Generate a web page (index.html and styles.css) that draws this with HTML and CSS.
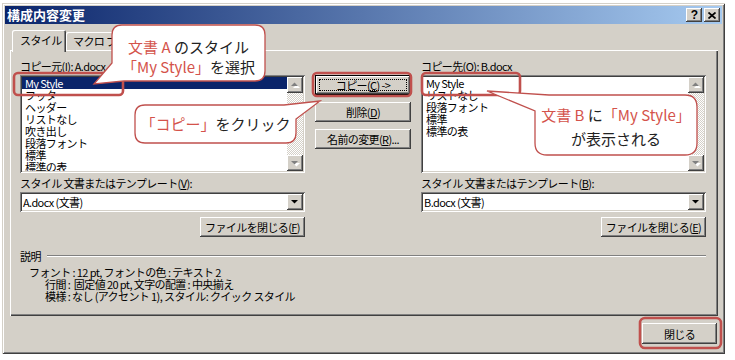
FILE: index.html
```html
<!DOCTYPE html>
<html lang="ja">
<head>
    <meta charset="UTF-8">
    <meta name="viewport" content="width=device-width, initial-scale=1.0">
    <title>構成内容変更</title>
    <link rel="stylesheet" href="styles.css">
</head>
<body>
    <div class="window">
        <div class="titlebar">
            <span class="title">構成内容変更</span>
            <div class="caption-buttons">
                <span class="cap-btn help">?</span>
                <span class="cap-btn">
                    <svg width="8" height="7" viewBox="0 0 8 7"><path d="M0.5 0.5L7.5 6.5M7.5 0.5L0.5 6.5" stroke="#000" stroke-width="1.7"/></svg>
                </span>
            </div>
        </div>
        <div class="client">
            <div class="tabs">
                <div class="tab active">スタイル</div>
                <div class="tab">マクロ プロジェクト アイテム</div>
            </div>
            <div class="panel">
                <div class="columns">
                    <!-- copy source -->
                    <div class="side">
                        <div class="label">コピー元(<u>I</u>): A.docx</div>
                        <div class="listbox">
                            <ul class="items">
                                <li class="selected">My Style</li>
                                <li>フッター</li>
                                <li>ヘッダー</li>
                                <li>リストなし</li>
                                <li>吹き出し</li>
                                <li>段落フォント</li>
                                <li>標準</li>
                                <li>標準の表</li>
                            </ul>
                            <div class="scrollbar">
                                <span class="sb-btn"><svg width="12" height="12" viewBox="0 0 12 12"><path d="M3 8h7L6.5 4.5z" fill="#fff" transform="translate(1 1)"/><path d="M2 7h7L5.5 3.5z" fill="#808080"/></svg></span>
                                <span class="sb-track"></span>
                                <span class="sb-btn"><svg width="12" height="12" viewBox="0 0 12 12"><path d="M3 5h7L6.5 8.5z" fill="#fff" transform="translate(1 1)"/><path d="M2 4h7L5.5 7.5z" fill="#808080"/></svg></span>
                            </div>
                        </div>
                        <div class="label sub">スタイル 文書またはテンプレート(<u>V</u>):</div>
                        <div class="combo">
                            <span class="combo-text">A.docx (文書)</span>
                            <span class="combo-btn"><svg width="12" height="12" viewBox="0 0 12 12"><path d="M2 4h7L5.5 7.5z" fill="#000"/></svg></span>
                        </div>
                        <button class="btn file-btn">ファイルを閉じる(<u>F</u>)</button>
                    </div>

                    <div class="middle">
                        <button class="btn default"><span class="focus">コピー(<u>C</u>) -&gt;</span></button>
                        <button class="btn">削除(<u>D</u>)</button>
                        <button class="btn">名前の変更(<u>R</u>)...</button>
                    </div>

                    <!-- copy target -->
                    <div class="side">
                        <div class="label">コピー先(<u>O</u>): B.docx</div>
                        <div class="listbox">
                            <ul class="items">
                                <li>My Style</li>
                                <li>リストなし</li>
                                <li>段落フォント</li>
                                <li>標準</li>
                                <li>標準の表</li>
                            </ul>
                            <div class="scrollbar">
                                <span class="sb-btn"><svg width="12" height="12" viewBox="0 0 12 12"><path d="M3 8h7L6.5 4.5z" fill="#fff" transform="translate(1 1)"/><path d="M2 7h7L5.5 3.5z" fill="#808080"/></svg></span>
                                <span class="sb-track"></span>
                                <span class="sb-btn"><svg width="12" height="12" viewBox="0 0 12 12"><path d="M3 5h7L6.5 8.5z" fill="#fff" transform="translate(1 1)"/><path d="M2 4h7L5.5 7.5z" fill="#808080"/></svg></span>
                            </div>
                        </div>
                        <div class="label sub">スタイル 文書またはテンプレート(<u>B</u>):</div>
                        <div class="combo">
                            <span class="combo-text">B.docx (文書)</span>
                            <span class="combo-btn"><svg width="12" height="12" viewBox="0 0 12 12"><path d="M2 4h7L5.5 7.5z" fill="#000"/></svg></span>
                        </div>
                        <button class="btn file-btn">ファイルを閉じる(<u>E</u>)</button>
                    </div>
                </div>

                <div class="group">
                    <div class="group-head"><span>説明</span><span class="etch"></span></div>
                    <div class="desc">
                        <div>フォント : 12 pt, フォントの色 : テキスト 2</div>
                        <div class="indent">行間 :&nbsp; 固定値 20 pt, 文字の配置 : 中央揃え</div>
                        <div class="indent">模様 : なし (アクセント 1), スタイル: クイック スタイル</div>
                    </div>
                </div>
            </div>
            <div class="footer">
                <button class="btn close-btn">閉じる</button>
            </div>
        </div>
    </div>

    <!-- annotation layer -->
    <svg class="marks" width="735" height="360" viewBox="0 0 735 360">
        <g fill="none" stroke="#c0504d" stroke-width="2.6">
            <rect x="14" y="73" width="109" height="22" rx="4"/>
            <rect x="313" y="73" width="98" height="23" rx="4"/>
            <rect x="422" y="73" width="98" height="22" rx="4"/>
            <rect x="640" y="318" width="81" height="30" rx="5"/>
        </g>
        <g fill="#fff" stroke="#c0504d" stroke-width="1.3">
            <path d="M122 25H255Q265 25 265 35V71Q265 81 255 81H124L94 84L112 63V35Q112 25 122 25Z"/>
            <path d="M145 105H284L320 101L296 119V133Q296 143 286 143H145Q135 143 135 133V115Q135 105 145 105Z"/>
            <path d="M487 91L549 95H685Q697 95 697 107V143Q697 155 685 155H547Q535 155 535 143V111Z"/>
        </g>
    </svg>
    <div class="note note-a"><span class="hl">文書 A</span> のスタイル<br><span class="hl">「My Style」</span>を選択</div>
    <div class="note note-b"><span class="hl">「コピー」</span>をクリック</div>
    <div class="note note-c"><span class="hl">文書 B</span> に<span class="hl">「My Style」</span><br>が表示される</div>
</body>
</html>
```

FILE: styles.css
```css
* {
    box-sizing: border-box;
}
body {
    margin: 0;
    background: #fff;
    font-family: "Noto Sans CJK JP", sans-serif;
    font-size: 11px;
    color: #000;
}
.window {
    width: 723px;
    height: 351px;
    margin: 3px 0 0 2px;
    padding: 3px;
    background: #d4d0c8;
    box-shadow: inset 1px 1px #d4d0c8, inset -1px -1px #404040, inset 2px 2px #fff, inset -2px -2px #808080;
    letter-spacing: -0.6px;
}
.titlebar {
    height: 18px;
    display: flex;
    align-items: center;
    justify-content: space-between;
    padding: 0 2px;
    background: linear-gradient(to right, #0a246a, #a6caf0);
}
.title {
    color: #fff;
    font-weight: bold;
    font-size: 13px;
    letter-spacing: 0;
    line-height: 18px;
}
.caption-buttons {
    display: flex;
    gap: 2px;
}
.cap-btn {
    width: 16px;
    height: 14px;
    display: flex;
    align-items: center;
    justify-content: center;
    background: #d4d0c8;
    box-shadow: inset -1px -1px #404040, inset 1px 1px #fff, inset -2px -2px #808080;
}
.cap-btn.help {
    font: bold 12px "Liberation Sans", sans-serif;
    line-height: 14px;
}
.client {
    padding: 6px 4px 0 5px;
}

/* tabs */
.tabs {
    display: flex;
    align-items: flex-end;
    height: 20px;
    padding-left: 2px;
}
.tab {
    height: 18px;
    padding: 0 7px;
    line-height: 18px;
    white-space: nowrap;
    border-radius: 2px 2px 0 0;
    box-shadow: inset 1px 1px #fff, inset -1px 0 #404040, inset -2px 0 #808080;
}
.tab.active {
    width: 54px;
    height: 22px;
    margin-bottom: -2px;
    padding: 0 8px;
    line-height: 20px;
    background: #d4d0c8;
    position: relative;
    z-index: 1;
}
.panel {
    height: 266px;
    padding: 9px 12px 0 10px;
    box-shadow: inset 1px 1px #fff, inset -1px -1px #404040, inset -2px -2px #808080;
}
.columns {
    display: grid;
    grid-template-columns: 285px 96px 285px;
    column-gap: 10px;
}
.side {
    display: flex;
    flex-direction: column;
}
.label {
    height: 14px;
    line-height: 14px;
    white-space: nowrap;
}
.label.sub {
    margin-top: 3px;
}

/* list boxes */
.listbox {
    margin-top: 2px;
    height: 98px;
    padding: 2px;
    display: flex;
    background: #fff;
    box-shadow: inset 1px 1px #808080, inset -1px -1px #fff, inset 2px 2px #404040, inset -2px -2px #d4d0c8;
}
.items {
    flex: 1;
    margin: 0;
    padding: 0;
    list-style: none;
    overflow: hidden;
}
.items li {
    height: 12px;
    line-height: 12px;
    padding-left: 3px;
    white-space: nowrap;
}
.items li.selected {
    background: #0a246a;
    color: #fff;
}
.scrollbar {
    width: 16px;
    display: flex;
    flex-direction: column;
}
.sb-btn,
.combo-btn {
    width: 16px;
    height: 16px;
    display: flex;
    align-items: center;
    justify-content: center;
    background: #d4d0c8;
    box-shadow: inset -1px -1px #404040, inset 1px 1px #fff, inset -2px -2px #808080;
}
.sb-track {
    flex: 1;
    background: repeating-conic-gradient(#d4d0c8 0 25%, #fff 0 50%) 0 0 / 2px 2px;
}

/* combo boxes */
.combo {
    margin-top: 2px;
    height: 20px;
    padding: 2px;
    display: flex;
    align-items: center;
    background: #fff;
    box-shadow: inset 1px 1px #808080, inset -1px -1px #fff, inset 2px 2px #404040, inset -2px -2px #d4d0c8;
}
.combo-text {
    flex: 1;
    padding-left: 1px;
    line-height: 16px;
}

/* buttons */
.btn {
    font: inherit;
    letter-spacing: inherit;
    color: #000;
    height: 20px;
    padding: 0;
    border: 0;
    background: #d4d0c8;
    box-shadow: inset -1px -1px #404040, inset 1px 1px #fff, inset -2px -2px #808080;
    white-space: nowrap;
}
.btn.default {
    padding: 4px;
    box-shadow: inset 0 0 0 1px #000, inset -2px -2px #404040, inset 2px 2px #fff, inset -3px -3px #808080;
}
.focus {
    display: block;
    height: 100%;
    line-height: 10px;
    border: 1px dotted #000;
}
.file-btn {
    margin-top: 5px;
    align-self: flex-end;
    width: 105px;
}
.middle {
    padding-top: 16px;
    display: flex;
    flex-direction: column;
    gap: 7px;
}

/* description */
.group {
    margin-top: 12px;
}
.group-head {
    height: 14px;
    display: flex;
    align-items: center;
}
.etch {
    flex: 1;
    height: 2px;
    margin-left: 6px;
    border-top: 1px solid #808080;
    border-bottom: 1px solid #fff;
}
.desc {
    margin-top: 3px;
    padding-left: 9px;
    line-height: 12px;
    white-space: nowrap;
}
.desc .indent {
    padding-left: 16px;
}
.footer {
    display: flex;
    justify-content: flex-end;
    padding: 7px 1px 0 0;
}
.close-btn {
    width: 75px;
    height: 21px;
}

/* annotations */
.marks {
    position: absolute;
    top: 0;
    left: 0;
    z-index: 2;
}
.note {
    position: absolute;
    z-index: 3;
    font-size: 15px;
    color: #222;
    text-align: center;
    white-space: nowrap;
}
.note .hl {
    color: #d4534b;
}
.note-a {
    left: 112px;
    top: 37px;
    width: 153px;
    line-height: 20px;
}
.note-b {
    left: 135px;
    top: 112px;
    width: 161px;
    line-height: 24px;
}
.note-c {
    left: 535px;
    top: 103px;
    width: 162px;
    line-height: 24px;
}
```
